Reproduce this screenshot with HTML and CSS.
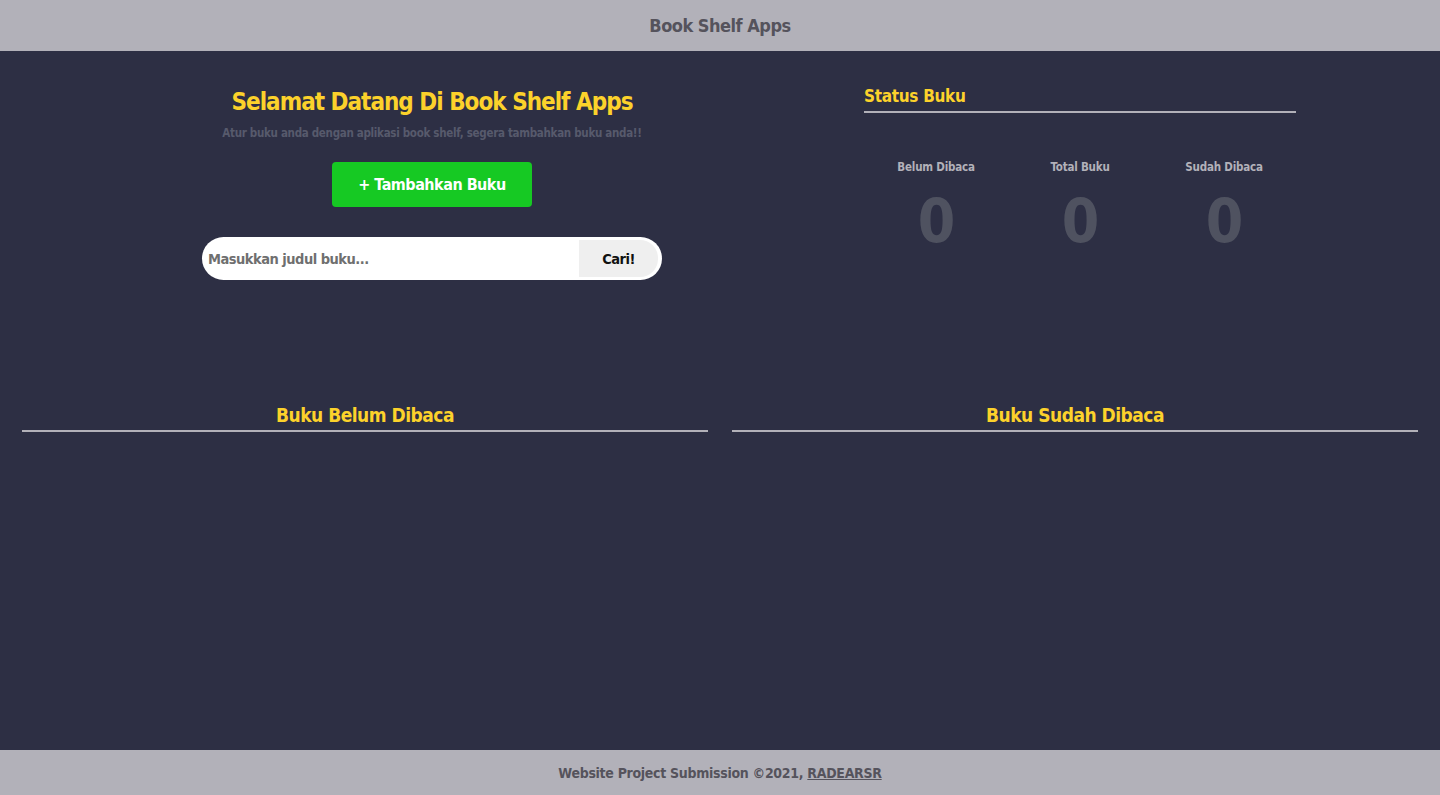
FILE: index.html
```html
<!DOCTYPE html>
<html lang="id">
<head>
<meta charset="utf-8">
<title>Book Shelf Apps</title>
<link rel="stylesheet" href="styles.css">
</head>
<body>
<header class="topbar">Book Shelf Apps</header>
<main class="main">
  <section class="top">
    <div class="welcome">
      <h1 class="welcome-title">Selamat Datang Di Book Shelf Apps</h1>
      <p class="welcome-sub">Atur buku anda dengan aplikasi book shelf, segera tambahkan buku anda!!</p>
      <button class="add-btn">+ Tambahkan Buku</button>
      <form class="search">
        <input class="search-input" type="text" placeholder="Masukkan judul buku...">
        <button class="search-btn" type="button">Cari!</button>
      </form>
    </div>
    <div class="status">
      <h2 class="status-title">Status Buku</h2>
      <div class="stats">
        <div class="stat"><span class="stat-label">Belum Dibaca</span><span class="stat-num">0</span></div>
        <div class="stat"><span class="stat-label">Total Buku</span><span class="stat-num">0</span></div>
        <div class="stat"><span class="stat-label">Sudah Dibaca</span><span class="stat-num">0</span></div>
      </div>
    </div>
  </section>
  <section class="shelves">
    <div class="shelf"><h2 class="shelf-title">Buku Belum Dibaca</h2></div>
    <div class="shelf"><h2 class="shelf-title">Buku Sudah Dibaca</h2></div>
  </section>
</main>
<footer class="footer">Website Project Submission ©2021, <a class="footer-link" href="#">RADEARSR</a></footer>
</body>
</html>
```

FILE: styles.css
```css
* { box-sizing: border-box; }
html, body { height: 100%; }
body {
  margin: 0;
  display: flex;
  flex-direction: column;
  background: #2d2f44;
  font-family: "DejaVu Sans Condensed", "DejaVu Sans", sans-serif;
  font-weight: bold;
}
.topbar {
  height: 51px;
  background: #b2b1b9;
  color: #55535c;
  font-size: 18px;
  letter-spacing: -0.5px;
  display: flex;
  align-items: center;
  justify-content: center;
}
.main { flex: 1; display: flex; flex-direction: column; }
.top {
  display: grid;
  grid-template-columns: 864px 432px;
  padding-top: 30px;
}
.welcome {
  display: flex;
  flex-direction: column;
  align-items: center;
}
.welcome-title {
  margin: 0;
  color: #fcd22b;
  font-size: 24px;
  letter-spacing: -1px;
  line-height: 42px;
}
.welcome-sub {
  margin: 1px 0 0;
  color: #575a6c;
  font-size: 11.5px;
  letter-spacing: -0.3px;
  line-height: 18px;
}
.add-btn {
  margin-top: 20px;
  width: 200px;
  height: 45px;
  border: none;
  border-radius: 4px;
  background: #16c923;
  color: #fff;
  font-family: inherit;
  font-weight: bold;
  font-size: 16px;
  letter-spacing: -0.5px;
}
.search {
  margin: 30px 0 0 0;
  width: 460px;
  height: 43px;
  display: flex;
  background: #fff;
  border-radius: 22px;
  padding: 3px 4px 3px 0;
}
.search-input {
  flex: 1;
  border: none;
  outline: none;
  background: transparent;
  border-radius: 22px 0 0 22px;
  padding: 0 6px;
  font-family: inherit;
  font-weight: bold;
  font-size: 14.5px;
  letter-spacing: -0.5px;
  color: #333;
}
.search-input::placeholder { color: #6f6f6f; }
.search-btn {
  width: 79px;
  border: none;
  background: #efefef;
  border-radius: 0 18px 18px 0;
  font-family: inherit;
  font-weight: bold;
  font-size: 14.5px;
  letter-spacing: -0.5px;
  color: #111;
}
.status-title {
  margin: 1px 0 0;
  color: #fcd22b;
  font-size: 17px;
  letter-spacing: -0.3px;
  line-height: 28px;
  border-bottom: 2px solid #b2b1b9;
  padding-bottom: 1px;
}
.stats {
  display: grid;
  grid-template-columns: repeat(3, 1fr);
  margin-top: 45px;
}
.stat {
  display: flex;
  flex-direction: column;
  align-items: center;
}
.stat-label {
  color: #b2b1b9;
  font-size: 11.5px;
  letter-spacing: -0.2px;
  line-height: 18px;
}
.stat-num {
  margin-top: 10px;
  color: #4f5260;
  font-size: 60px;
  letter-spacing: -1px;
  line-height: 70px;
}
.shelves {
  display: grid;
  grid-template-columns: 1fr 1fr;
  gap: 24px;
  padding: 120px 22px 0;
}
.shelf-title {
  margin: 0;
  text-align: center;
  color: #fcd22b;
  font-size: 19px;
  letter-spacing: -0.5px;
  line-height: 30px;
  border-bottom: 2px solid #b2b1b9;
}
.footer {
  height: 45px;
  background: #b2b1b9;
  color: #55535c;
  font-size: 14px;
  letter-spacing: -0.3px;
  display: flex;
  align-items: center;
  justify-content: center;
  white-space: pre;
}
.footer-link { color: #55535c; }
```
